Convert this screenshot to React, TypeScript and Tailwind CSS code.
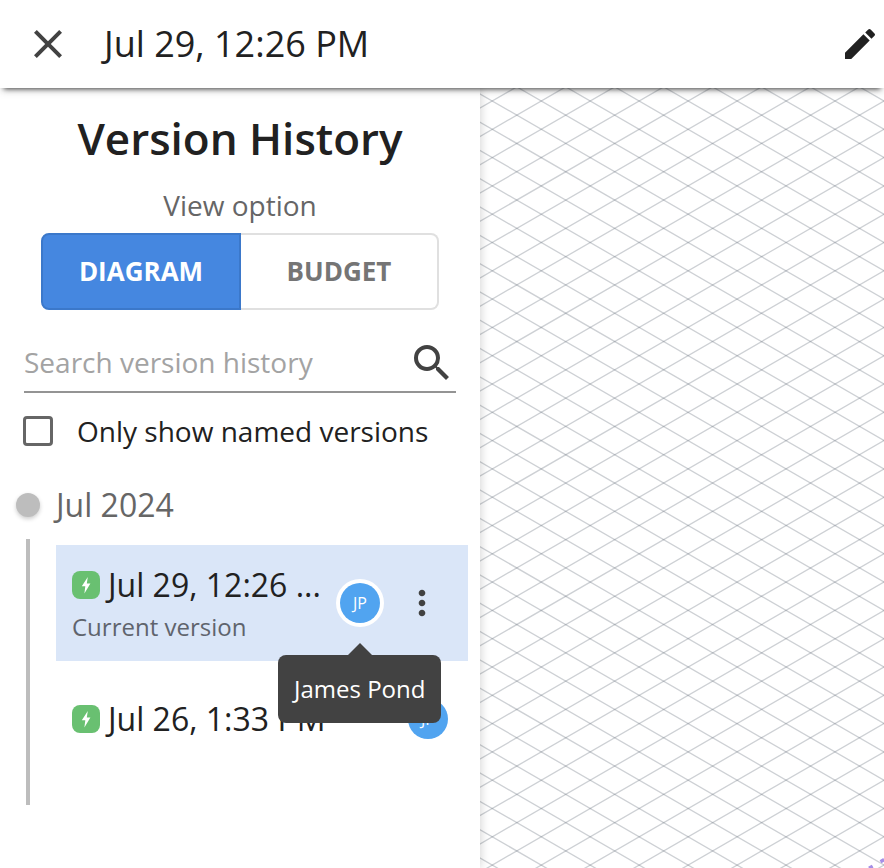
import { MdClose, MdEdit, MdMoreVert, MdSearch } from "react-icons/md";

function AutoSaveBadge() {
  return (
    <span className="flex size-7 shrink-0 items-center justify-center rounded-lg bg-[#69c071]">
      <svg viewBox="0 0 28 28" className="size-7 fill-white" aria-hidden="true">
        <path d="M15.8 6 L9.8 15.2 H13.3 L12.4 22.4 L18.4 12.6 H14.8 Z" />
      </svg>
    </span>
  );
}

function Avatar({ initials }: { initials: string }) {
  return (
    <span className="flex size-10 items-center justify-center rounded-full bg-[#51a4f0] text-base text-white">
      {initials}
    </span>
  );
}

function Tooltip({ text }: { text: string }) {
  return (
    <div
      role="tooltip"
      className="absolute top-full left-[-58px] z-10 mt-7 rounded-lg bg-[#424242] px-4 py-[18px] text-2xl leading-8 whitespace-nowrap text-white"
    >
      <svg viewBox="0 0 24 12" className="absolute -top-3 left-[70px] h-3 w-6 fill-[#424242]" aria-hidden="true">
        <path d="M0 12 L12 0 L24 12 Z" />
      </svg>
      {text}
    </div>
  );
}

const CELL_W = 48.96;
const CELL_H = 28.3;
const ORIGIN = { x: 12.3, y: 13 };
const REACH = 60;

function gridLines(direction: 1 | -1) {
  const parts: string[] = [];
  for (let k = -REACH; k <= REACH * 2; k++) {
    const y = ORIGIN.y + k * CELL_H;
    parts.push(
      `M${ORIGIN.x - CELL_W} ${y - direction * CELL_H} L${ORIGIN.x + REACH * CELL_W} ${y + direction * REACH * CELL_H}`,
    );
  }
  return parts.join(" ");
}

function IsoGrid() {
  return (
    <svg className="absolute inset-0 size-full" fill="none" aria-hidden="true">
      <path d={gridLines(1)} stroke="#5a6270" strokeOpacity="0.3" strokeWidth="1.3" />
      <path d={gridLines(-1)} stroke="#5a6270" strokeOpacity="0.3" strokeWidth="1.3" />
      <path d="M389 780.2 L440 751.2" stroke="#a58fe6" strokeWidth="3.4" strokeDasharray="4.2 9" />
    </svg>
  );
}

export default function App() {
  return (
    <div className="flex min-h-screen flex-col bg-white font-['Open_Sans','Noto_Sans',sans-serif] text-[#212121]">
      <header className="z-20 flex h-[88px] items-center bg-white pr-1 pl-6 shadow-[0_5px_5px_-4px_rgba(0,0,0,0.7),0_4px_8px_rgba(0,0,0,0.1)]">
        <button type="button" aria-label="Close" className="text-[#424242]">
          <MdClose className="size-12" />
        </button>
        <h1 className="ml-8 flex-1 text-4xl">Jul 29, 12:26 PM</h1>
        <button type="button" aria-label="Edit">
          <MdEdit className="size-10" />
        </button>
      </header>

      <div className="flex flex-1">
        <aside className="z-10 w-[480px] shrink-0 bg-white shadow-[0_0_10px_rgba(0,0,0,0.2)]">
          <h2 className="pt-5 text-center text-[44px] leading-[60px] font-semibold">Version History</h2>
          <p className="mt-[17px] text-center text-[28px] leading-10 text-[#666666]">View option</p>

          <div className="mx-[41px] mt-2 flex h-[77px] text-[26px] font-bold">
            <button
              type="button"
              aria-pressed="true"
              className="w-[200px] rounded-l-lg border-2 border-[#3b78ca] bg-[#4587e0] text-white"
            >
              DIAGRAM
            </button>
            <button
              type="button"
              aria-pressed="false"
              className="flex-1 rounded-r-lg border-2 border-l-0 border-[#e0e0e0] text-[#757575]"
            >
              BUDGET
            </button>
          </div>

          <label className="mx-6 mt-6 flex h-[59px] items-center border-b-2 border-[#949494]">
            <input
              type="text"
              aria-label="Search version history"
              placeholder="Search version history"
              className="min-w-0 flex-1 pb-0.5 text-[28px] leading-10 outline-none placeholder:text-[#a3a3a3]"
            />
            <MdSearch className="size-12 text-[#424242]" />
          </label>

          <label className="mx-[23px] mt-[18px] flex h-10 items-center gap-6 text-[28px]">
            <input type="checkbox" className="size-[30px] appearance-none rounded-sm border-3 border-[#666666]" />
            Only show named versions
          </label>

          <section className="mt-8 pr-3 pl-4">
            <h3 className="flex h-11 items-center gap-4 text-[32px] text-[#666666]">
              <span className="size-6 rounded-full bg-[#bdbdbd] shadow-[0_2px_4px_rgba(0,0,0,0.2)]" />
              Jul 2024
            </h3>
            <div className="mt-3 ml-[10px] h-[266px] border-l-4 border-[#bdbdbd] pt-[6px] pl-[26px]">
              <div className="flex h-[116px] items-center bg-[#dae6f8] px-4">
                <div className="min-w-0 flex-1 pt-1">
                  <div className="flex items-center gap-2">
                    <AutoSaveBadge />
                    <span className="text-[32px] leading-11 whitespace-nowrap">Jul 29, 12:26 ...</span>
                  </div>
                  <div className="text-2xl leading-10 text-[#5f646d]">Current version</div>
                </div>
                <div className="relative ml-4 rounded-full bg-white p-1">
                  <Avatar initials="JP" />
                  <Tooltip text="James Pond" />
                </div>
                <button type="button" aria-label="More options" className="mr-[10px] ml-[18px] text-[#424242]">
                  <MdMoreVert className="size-10" />
                </button>
              </div>
              <div className="flex h-[116px] items-center gap-2 pr-5 pl-4">
                <AutoSaveBadge />
                <span className="flex-1 text-[32px] leading-11">Jul 26, 1:33 PM</span>
                <Avatar initials="JP" />
              </div>
            </div>
          </section>
        </aside>

        <main className="relative flex-1 overflow-hidden">
          <IsoGrid />
        </main>
      </div>
    </div>
  );
}
